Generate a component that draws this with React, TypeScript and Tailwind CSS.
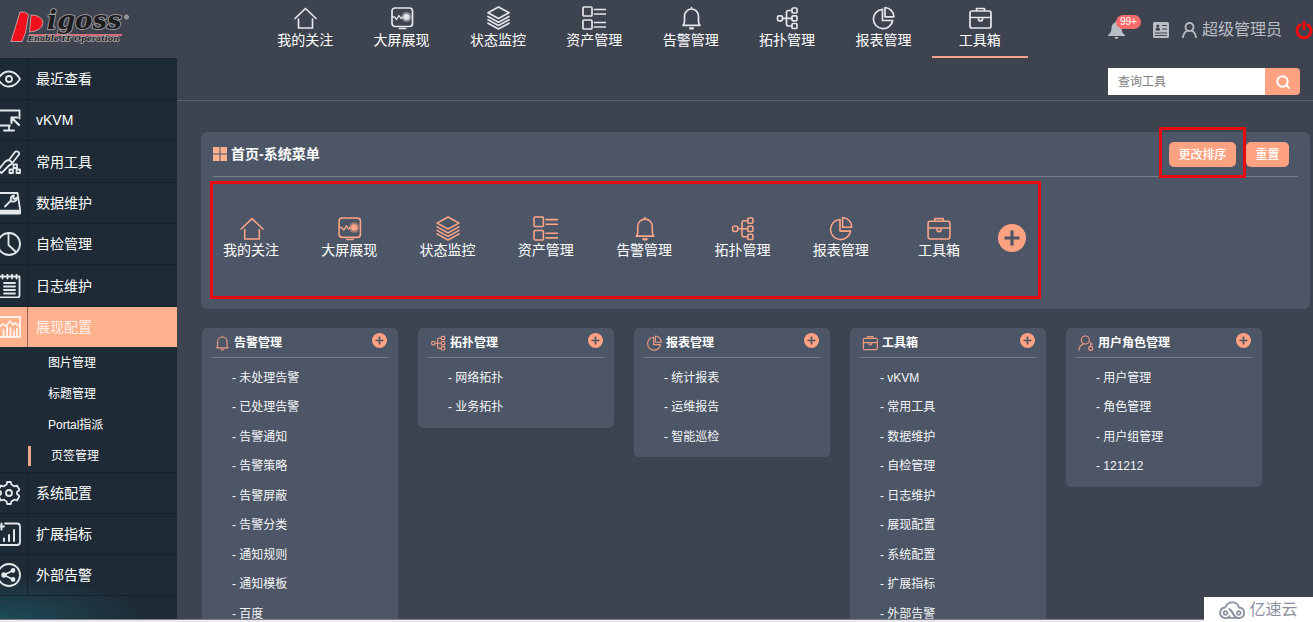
import React from 'react';
import clsx from 'clsx';

type IconProps = { className?: string; strokeWidth?: number };

const Svg: React.FC<IconProps & { children: React.ReactNode }> = ({
  className,
  strokeWidth = 1.7,
  children,
}) => (
  <svg
    viewBox="0 0 24 24"
    fill="none"
    stroke="currentColor"
    strokeWidth={strokeWidth}
    strokeLinecap="round"
    strokeLinejoin="round"
    className={clsx('shrink-0', className)}
    aria-hidden="true"
  >
    {children}
  </svg>
);

const HomeIcon = (p: IconProps) => (
  <Svg {...p}>
    <path d="M2 12.500 12.500 2.500 23 12.500" />
    <path d="M5.500 13v9h14v-9" />
  </Svg>
);

const ScreenIcon = (p: IconProps) => (
  <Svg {...p}>
    <rect x="2" y="2" width="20.500" height="18.500" rx="3" />
    <path d="M2.500 11h2l2 2.500 2.500-4 2 3 2-1.500" strokeWidth="1.300" />
    <circle cx="16.500" cy="11" r="5" fill="currentColor" fillOpacity="0.45" stroke="none" />
    <circle cx="16.500" cy="11" r="3" fill="currentColor" stroke="none" />
    <path d="M9.500 22.500h6" />
  </Svg>
);

const LayersIcon = (p: IconProps) => (
  <Svg {...p}>
    <path d="M12.500 1 23 6.800 12.500 12.500 2 6.800z" />
    <path d="M2 10.500 12.500 16.200 23 10.500M2 13.800 12.500 19.500 23 13.800M2 17.200 12.500 23 23 17.200" />
  </Svg>
);

const ListIcon = (p: IconProps) => (
  <Svg {...p}>
    <rect x="1" y="1" width="9" height="9" rx="1" />
    <rect x="1" y="14" width="9" height="9" rx="1" />
    <path d="M12.500 3.500h11M12.500 8h11M12.500 16.500h11M12.500 21h11" />
  </Svg>
);

const BellIcon = (p: IconProps) => (
  <Svg {...p}>
    <path d="M12.500 1.500V3M5.500 15.500V10a7 7 0 0 1 14 0v5.500q0 2.500 1.500 3.800H4q1.500-1.300 1.500-3.800z" />
    <path d="M11 22.300h3" strokeWidth="2.200" />
  </Svg>
);

const TopologyIcon = (p: IconProps) => (
  <Svg {...p}>
    <rect x="2.500" y="9.800" width="5" height="5" rx="1.500" />
    <rect x="17" y="2" width="5" height="5" rx="1" />
    <rect x="17" y="9.800" width="5" height="5" rx="1" />
    <rect x="17" y="17.500" width="5" height="5" rx="1" />
    <path d="M7.500 12.300H17M17 4.500h-3.500q-2 0-2 2v11.500q0 2 2 2H17" />
  </Svg>
);

const PieIcon = (p: IconProps) => (
  <Svg {...p}>
    <path d="M11.500 3.300a9.700 9.700 0 1 0 10.200 11.200H11.500z" />
    <path d="M14 1.500v9.300h8.800A9.300 9.300 0 0 0 14 1.500z" />
  </Svg>
);

const ToolboxIcon = (p: IconProps) => (
  <Svg {...p}>
    <rect x="2" y="5" width="21" height="17" rx="2" />
    <path d="M8.500 4.500V2.500h8v2M2 11.500h21M10.500 11.500v1.500a2 2 0 0 0 4 0v-1.500" />
  </Svg>
);

const UserRoleIcon = (p: IconProps) => (
  <Svg {...p}>
    <circle cx="11" cy="7.500" r="6" />
    <path d="M1.500 23c0-5 2.500-8 6.500-9.500" />
    <circle cx="19" cy="20" r="3" />
    <path d="M19 17v-6M19 13.500h2.500" />
  </Svg>
);

const EyeIcon = (p: IconProps) => (
  <Svg {...p}>
    <path d="M1 12c3-5 7-7.500 11-7.500S20 7 23 12c-3 5-7 7.500-11 7.500S4 17 1 12z" />
    <circle cx="12" cy="12" r="3" />
  </Svg>
);

const KvmIcon = (p: IconProps) => (
  <Svg {...p}>
    <path d="M13 17.500H2V2.500h20.500v8" />
    <path d="m14.500 9.500 7.500 7.500M14.500 15v-5.500h6" strokeWidth="2.200" />
    <path d="M12 18v4M7 22.500h10" />
  </Svg>
);

const ToolsIcon = (p: IconProps) => (
  <Svg {...p}>
    <path d="M12 10 18 2c1.500-1.500 5 0 4 2.500l-6.500 8.200M12 10c-3 0-4 1.500-5.500 3.500L1 20.500 4.500 23l7-7c2-2 3.500-1.500 4-3.300zM12 10l3.500 2.700" />
    <rect x="16.500" y="14.500" width="3.500" height="3.500" />
    <rect x="12.500" y="19.500" width="3.500" height="3.500" />
    <rect x="19.500" y="19.500" width="3.500" height="3.500" />
  </Svg>
);

const DataIcon = (p: IconProps) => (
  <Svg {...p}>
    <path d="M3 2h17.500l2.500 16v4.500H1V2" />
    <path d="M1 20.500h22" strokeWidth="3.500" />
    <path d="m8 15.500 6.500-6.500M14 9.500c-1-3 .5-5 3-5l-1 2.500 1.500 1L20 6.500c0 3-2 4.500-5 4" strokeWidth="1.800" />
  </Svg>
);

const CheckPieIcon = (p: IconProps) => (
  <Svg {...p}>
    <circle cx="12" cy="12" r="11" />
    <path d="M11.500 1v12l7.500 7" />
  </Svg>
);

const LogIcon = (p: IconProps) => (
  <Svg {...p}>
    <path d="M2 2.500h20.500v19q0 2-2 2H2z" />
    <path d="M5.500 .5v4M10.500 .5v4M15 .5v4M19.500 .5v4M7 9h11M7 12.500h11M7 16h11M7 19.500h11" />
  </Svg>
);

const ChartConfigIcon = (p: IconProps) => (
  <Svg {...p}>
    <rect x="1" y="2" width="22" height="20" />
    <path d="m2 12 4-3 3 2 4-5 3 4 2-2 4 3" />
    <path d="M6.500 21v-6M10 21v-9M13.500 21v-8M17 21v-5M20 21v-7" strokeWidth="2" />
  </Svg>
);

const GearIcon = (p: IconProps) => (
  <Svg {...p}>
    <path d="M9.600 3.600 10.200 1h3.600l.6 2.600 2.800 1.700 2.700-.8 1.900 3.100q1 1.300 0 2L20 11v2l1.800 1.400q1 .8 0 2L20 19.500l-2.800-.8-2.800 1.700-.6 2.600h-3.600l-.6-2.600-2.800-1.700-2.800.8L2.200 16.400q-1-1.200 0-2L4 13v-2L2.200 9.600q-1-.7 0-2L4 4.500l2.800.8z" />
    <circle cx="12" cy="12" r="3" />
  </Svg>
);

const ExtendIcon = (p: IconProps) => (
  <Svg {...p}>
    <path d="M8 1.500h12q3 0 3 3V20q0 3-3 3H3q-2 0-2-2V10" />
    <path d="M1 4.500h6M4.500 1.500v6M7 19v-2.500M12 19v-6M17 19V8" strokeWidth="2" />
  </Svg>
);

const ShareIcon = (p: IconProps) => (
  <Svg {...p}>
    <circle cx="12" cy="12" r="11" />
    <path d="m16 7.500-9 4.500 9 4.500" />
    <circle cx="16" cy="7.500" r="1.500" fill="currentColor" />
    <circle cx="7" cy="12" r="1.800" fill="currentColor" />
    <circle cx="16" cy="16.500" r="1.500" fill="currentColor" />
  </Svg>
);

const PlusCircle: React.FC<{ className?: string }> = ({ className }) => (
  <svg viewBox="0 0 28 28" className={className} aria-hidden="true">
    <circle cx="14" cy="14" r="14" fill="#ffa281" />
    <path d="M14 6.500v15M6.500 14h15" stroke="#4d5666" strokeWidth="3.200" />
  </svg>
);

const MODULES = [
  { name: '我的关注', icon: HomeIcon },
  { name: '大屏展现', icon: ScreenIcon },
  { name: '状态监控', icon: LayersIcon },
  { name: '资产管理', icon: ListIcon },
  { name: '告警管理', icon: BellIcon },
  { name: '拓扑管理', icon: TopologyIcon },
  { name: '报表管理', icon: PieIcon },
  { name: '工具箱', icon: ToolboxIcon },
];

const SIDE_TOP = [
  { name: '最近查看', icon: EyeIcon },
  { name: 'vKVM', icon: KvmIcon },
  { name: '常用工具', icon: ToolsIcon },
  { name: '数据维护', icon: DataIcon },
  { name: '自检管理', icon: CheckPieIcon },
  { name: '日志维护', icon: LogIcon },
  { name: '展现配置', icon: ChartConfigIcon, active: true },
];

const SIDE_SUB = ['图片管理', '标题管理', 'Portal指派', '页签管理'];

const SIDE_BOTTOM = [
  { name: '系统配置', icon: GearIcon },
  { name: '扩展指标', icon: ExtendIcon },
  { name: '外部告警', icon: ShareIcon },
];

const CARDS = [
  {
    name: '告警管理',
    icon: BellIcon,
    items: ['未处理告警', '已处理告警', '告警通知', '告警策略', '告警屏蔽', '告警分类', '通知规则', '通知模板', '百度'],
  },
  { name: '拓扑管理', icon: TopologyIcon, items: ['网络拓扑', '业务拓扑'] },
  { name: '报表管理', icon: PieIcon, items: ['统计报表', '运维报告', '智能巡检'] },
  {
    name: '工具箱',
    icon: ToolboxIcon,
    items: ['vKVM', '常用工具', '数据维护', '自检管理', '日志维护', '展现配置', '系统配置', '扩展指标', '外部告警'],
  },
  { name: '用户角色管理', icon: UserRoleIcon, items: ['用户管理', '角色管理', '用户组管理', '121212'] },
];

const Logo = () => (
  <svg viewBox="0 0 140 48" className="h-12 w-[140px]" role="img" aria-label="Pigoss">
    <path d="M20 12q5-1 8.500 2.500L25.500 33 22 41.500H11z" fill="#f0101c" stroke="#c9b9bd" strokeWidth="0.800" />
    <path d="M31 15q11 0 12 8-1 8-13.500 9z" fill="#f0101c" stroke="#c9b9bd" strokeWidth="0.800" />
    <path d="M29 35h93" stroke="#d96a78" strokeWidth="2" />
    <g
      fill="#1d1d20"
      stroke="#aaa5a9"
      strokeWidth="1.600"
      paintOrder="stroke"
      fontStyle="italic"
      fontWeight="700"
      fontFamily="'DejaVu Serif', serif"
    >
      <text x="47" y="29" fontSize="26">igoss</text>
      <text x="28" y="41" fontSize="8">Enable IT Operation</text>
    </g>
    <circle cx="126.500" cy="17" r="2" fill="#8d8d94" stroke="#a9a4a8" />
  </svg>
);

const TopBar = () => (
  <header className="flex h-[58px] shrink-0 items-start">
    <div className="w-[257px] shrink-0">
      <Logo />
    </div>
    <nav className="grid w-[771px] grid-cols-8">
      {MODULES.map(({ name, icon: Icon }) => (
        <a
          key={name}
          href="#"
          className={clsx(
            'flex h-[58px] flex-col items-center border-b-2 pt-1.5 text-sm leading-5 text-white',
            name === '工具箱' ? 'border-[#f3a189]' : 'border-transparent',
          )}
        >
          <Icon className="size-6 text-[#e4e6ea]" />
          {name}
        </a>
      ))}
    </nav>
    <div className="ml-auto flex h-[60px] items-center text-[#b9bdc4]">
      <button type="button" aria-label="消息" className="relative mr-7">
        <svg viewBox="0 0 17 18" className="h-[18px] w-[17px]" fill="currentColor" aria-hidden="true">
          <path d="M8.500 0q1.500 0 1.500 1.800Q13.500 3 13.500 7q0 5 3.500 7v1H0v-1q3.500-2 3.500-7 0-4 3.500-5.200Q7 0 8.500 0zM6.500 16h4q-.5 2-2 2t-2-2z" />
        </svg>
        <span className="absolute -top-1.5 left-2 rounded-full bg-[#f56c6c] px-1 text-[10px] leading-[14px] text-white">
          99+
        </span>
      </button>
      <button type="button" aria-label="名片" className="mr-[13px]">
        <svg viewBox="0 0 16 16" className="size-4" aria-hidden="true">
          <rect width="16" height="16" rx="1.500" fill="#b9bdc4" />
          <circle cx="4.800" cy="4" r="1.500" fill="#3e4350" />
          <path d="M2.500 8.500q0-3 2.300-3t2.300 3z" fill="#3e4350" />
          <path d="M9 3.500h5M9 7h5M2 11h12M2 13.500h12" stroke="#3e4350" />
        </svg>
      </button>
      <a href="#" className="mr-[13px] flex items-center gap-[5px] text-base leading-5">
        <svg
          viewBox="0 0 15 16"
          className="h-4 w-[15px]"
          fill="none"
          stroke="currentColor"
          strokeWidth="1.800"
          strokeLinecap="round"
          aria-hidden="true"
        >
          <circle cx="7.500" cy="5" r="4" />
          <path d="M1 15.200q.8-5 4.500-6.500M14 15.200q-.8-5-4.500-6.500" />
        </svg>
        超级管理员
      </a>
      <button type="button" aria-label="退出">
        <svg
          viewBox="0 0 18 20"
          className="h-5 w-[18px]"
          fill="none"
          stroke="#f00a0a"
          strokeWidth="3"
          strokeLinecap="round"
          aria-hidden="true"
        >
          <path d="M5 5a7 7 0 1 0 8 0M9 2.500V9" />
        </svg>
      </button>
    </div>
  </header>
);

interface SideItemProps {
  name: string;
  icon: React.FC<IconProps>;
  active?: boolean;
}

const SideItem: React.FC<SideItemProps> = ({ name, icon: Icon, active }) => (
  <a
    href="#"
    className={clsx(
      'flex items-stretch border-t border-[#17212b] text-sm leading-5',
      active ? 'bg-[#ffb08d] text-[#fff1ea]' : 'text-white',
    )}
  >
    <span
      className={clsx(
        'flex w-7 shrink-0 items-center justify-end overflow-hidden border-r pr-1.5',
        active ? 'border-[#8a6758]' : 'border-[#17212b] text-[#e3e8ea]',
      )}
    >
      <Icon className="size-6" strokeWidth={1.800} />
    </span>
    <span className="flex items-center pl-2">{name}</span>
  </a>
);

const Sidebar = () => (
  <aside className="w-[177px] shrink-0 bg-[#1e2a35] bg-[radial-gradient(ellipse_150px_45px_at_0_100%,#1c4b58_0%,#1d3a46_50%,transparent_100%)]">
    <nav>
      <div className="grid auto-rows-[41px_41px_42px]">
        {SIDE_TOP.map(item => (
          <SideItem key={item.name} {...item} />
        ))}
      </div>
      <ul className="text-xs">
        {SIDE_SUB.map(name => (
          <li key={name} className="flex h-[31px] items-center pl-7">
            <a
              href="#"
              className={clsx(
                'flex h-5 items-center pl-5 text-white',
                name === '页签管理' && 'border-l-3 border-[#f0a88d]',
              )}
            >
              {name}
            </a>
          </li>
        ))}
      </ul>
      <div className="grid auto-rows-[41px] border-b border-[#17212b] pt-px">
        {SIDE_BOTTOM.map(item => (
          <SideItem key={item.name} {...item} />
        ))}
      </div>
    </nav>
  </aside>
);

const SearchBar = () => (
  <form
    className="flex h-[43px] items-start justify-end border-b border-[#5a636f] pt-2.5 pr-[13px]"
    onSubmit={e => e.preventDefault()}
  >
    <input
      type="text"
      aria-label="查询工具"
      placeholder="查询工具"
      className="h-[27px] w-[157px] bg-white px-2.5 text-xs text-gray-700 outline-none placeholder:text-[#808080]"
    />
    <button
      type="submit"
      aria-label="查询"
      className="flex h-[27px] w-[35px] items-center justify-center rounded-r bg-[#ffa281] text-white"
    >
      <svg viewBox="0 0 14 14" className="size-3.5" fill="none" stroke="currentColor" strokeWidth="2" aria-hidden="true">
        <circle cx="6.500" cy="6.500" r="5.200" />
        <path d="m10.200 10.200 3.300 3.300" />
      </svg>
    </button>
  </form>
);

const MenuPanel = () => (
  <section className="rounded-md bg-[#4d5666] px-3 pb-2.5">
    <div className="flex h-[45px] items-center border-b border-[#75808f]">
      <svg viewBox="0 0 14 14" className="size-3.5" fill="#ffb08d" aria-hidden="true">
        <path d="M0 0h6.500v6.500H0zM7.500 0H14v6.500H7.500zM0 7.500h6.500V14H0zM7.500 7.500H14V14H7.500z" />
      </svg>
      <h2 className="ml-1 text-sm leading-5 font-bold text-white">首页-系统菜单</h2>
      <div className="ml-auto flex gap-2.5 pr-[9px] text-xs font-medium text-white">
        <div className="relative">
          <button type="button" className="h-[25px] w-[67px] rounded-[5px] bg-[#ffa281] pt-0.5">
            更改排序
          </button>
          <span className="pointer-events-none absolute -inset-x-2.5 -top-[15px] -bottom-[11px] border-3 border-[#e60b0f]" />
        </div>
        <button type="button" className="h-[25px] w-[43px] rounded-[5px] bg-[#ffa281] pt-0.5">
          重置
        </button>
      </div>
    </div>
    {/* highlighted shortcut strip */}
    <div className="mt-1 -ml-[3px] flex w-[831px] items-start border-3 border-[#e60b0f] pt-8 pr-3 pb-[37px] pl-2.5">
      <div className="flex flex-1 justify-between">
        {MODULES.map(({ name, icon: Icon }) => (
          <a key={name} href="#" className="flex w-14 flex-col items-center text-sm leading-[18px] text-white">
            <Icon className="size-[25px] text-[#fda586]" strokeWidth={1.500} />
            {name}
          </a>
        ))}
      </div>
      <button type="button" aria-label="添加" className="mt-2 ml-[31px]">
        <PlusCircle className="size-7" />
      </button>
    </div>
  </section>
);

const MenuCard: React.FC<(typeof CARDS)[number]> = ({ name, icon: Icon, items }) => (
  <section className="w-[196px] shrink-0 rounded-[5px] bg-[#4d5666] px-2.5 pb-1.5">
    <div className="flex h-[30px] items-center border-b border-[#75808f] pl-0.5">
      <Icon className="size-4 text-[#f09a80]" />
      <h3 className="ml-1 text-xs leading-5 font-bold text-white">{name}</h3>
      <button type="button" aria-label={`添加${name}`} className="mr-px mb-1 ml-auto">
        <PlusCircle className="size-[15px]" />
      </button>
    </div>
    <ul className="grid auto-rows-[29px_30px] items-center pt-[5px] pl-5 text-xs text-[#f4f5f7]">
      {items.map(item => (
        <li key={item}>
          <a href="#">- {item}</a>
        </li>
      ))}
    </ul>
  </section>
);

const Watermark = () => (
  <div className="fixed right-0 bottom-0 flex h-[25px] w-[109px] items-center justify-center gap-1 bg-white text-base leading-5 text-[#8b91a0]">
    <svg viewBox="0 0 26 18" className="h-[18px] w-[26px]" fill="none" stroke="currentColor" strokeWidth="1.800" aria-hidden="true">
      <path d="M6.500 6.500a7 7 0 0 1 13.500 0 5.300 5.300 0 1 1-5 7.500c-1-2-2-4.500-4.500-5.800" />
      <path d="M6.500 6.500a5.300 5.300 0 1 0 4.500 8M9.500 7.500q2.500 1 4 4.500 2 4.500 6 4.800H7" />
      <circle cx="6.500" cy="12" r="1.800" />
      <circle cx="19.800" cy="12" r="1.800" />
    </svg>
    亿速云
  </div>
);

export default function App() {
  return (
    <div className="flex h-screen flex-col overflow-hidden bg-[#3e4350] font-['Liberation_Sans','Noto_Sans_CJK_SC',sans-serif]">
      <TopBar />
      <div className="flex min-h-0 flex-1">
        <Sidebar />
        <main className="min-w-0 flex-1 overflow-hidden">
          <SearchBar />
          <div className="flex flex-col gap-[19px] bg-[#3d4450] pt-[31px] pr-[3px] pl-6">
            <MenuPanel />
            <div className="flex items-start gap-5 pl-px">
              {CARDS.map(card => (
                <MenuCard key={card.name} {...card} />
              ))}
            </div>
          </div>
        </main>
      </div>
      <footer className="h-[3px] shrink-0 border-t border-[#7d7f87] bg-[#ece8ee]" />
      <Watermark />
    </div>
  );
}
